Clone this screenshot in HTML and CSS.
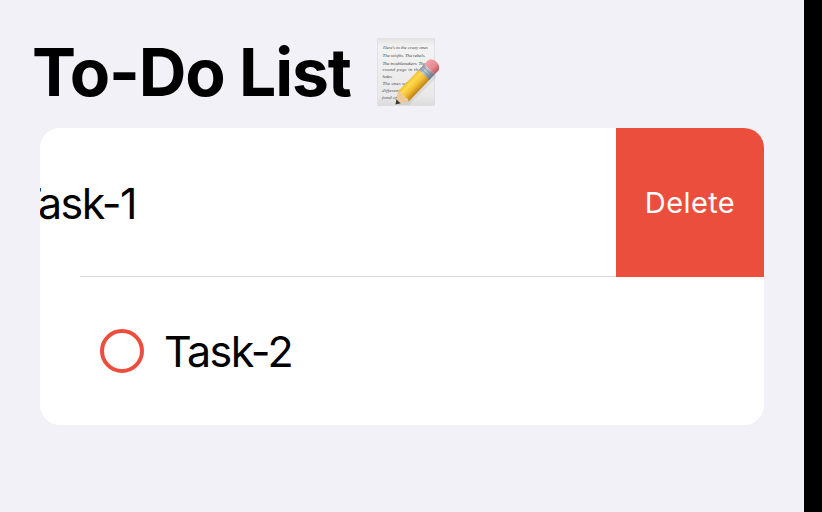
FILE: index.html
```html
<!DOCTYPE html>
<html lang="en">
<head>
<meta charset="utf-8">
<title>To-Do List</title>
<link rel="stylesheet" href="styles.css">
</head>
<body>
<main class="screen">
  <header class="header">
    <h1 class="title">To-Do List</h1>
    <svg class="memo" viewBox="0 0 66 72" role="img" aria-label="Memo">
      <defs>
        <linearGradient id="paper" x1="0" y1="0" x2="0" y2="1">
          <stop offset="0" stop-color="#e4e4e5"/><stop offset=".12" stop-color="#f3f3f3"/>
          <stop offset=".85" stop-color="#e9e9e9"/><stop offset="1" stop-color="#dcdcdd"/>
        </linearGradient>
        <linearGradient id="wood" x1="0" y1="0" x2="0" y2="1">
          <stop offset="0" stop-color="#f0c02e"/><stop offset=".25" stop-color="#fddb52"/>
          <stop offset=".6" stop-color="#f3bd30"/><stop offset="1" stop-color="#bd8018"/>
        </linearGradient>
        <linearGradient id="ferrule" x1="0" y1="0" x2="0" y2="1">
          <stop offset="0" stop-color="#8f9aa8"/><stop offset=".35" stop-color="#c5cdd6"/><stop offset="1" stop-color="#687382"/>
        </linearGradient>
        <linearGradient id="rubber" x1="0" y1="0" x2="0" y2="1">
          <stop offset="0" stop-color="#f3a3aa"/><stop offset=".6" stop-color="#e88790"/><stop offset="1" stop-color="#ba5665"/>
        </linearGradient>
      </defs>
      <rect x="1.7" y="2.8" width="57" height="66.5" fill="url(#paper)" stroke="#d9d9dc" stroke-width=".7"/>
      <g class="script">
        <text x="7" y="13" textLength="45">Here's to the crazy ones</text>
        <text x="6.5" y="21" textLength="43">The misfits. The rebels.</text>
        <text x="6.500" y="28.500" textLength="43">The troublemakers. The</text>
        <text x="6.5" y="35" textLength="38">round pegs in the</text>
        <text x="6.5" y="41.5" textLength="10">holes.</text>
        <text x="6.5" y="48.5" textLength="28">The ones who</text>
        <text x="6" y="55.5" textLength="22">differently</text>
        <text x="6" y="62.5" textLength="15">fond of</text>
      </g>
      <path d="M21 69L33 69L60 42V34z" fill="#777" opacity=".12"/>
      <g transform="translate(19.5 68.500) rotate(-46)">
        <path d="M0 0L11-7.300L14-2L13 3L11 7.300z" fill="#edc99a"/>
        <path d="M0 0L4.500-3L4.300 0L4.500 3z" fill="#35383b"/>
        <path d="M42-7.300V7.300H11Q14 5 11.500 2.200Q14 0 11.500-2.200Q14-5 11-7.300z" fill="url(#wood)"/>
        <path d="M41-7.300H49V7.300H41z" fill="url(#ferrule)"/>
        <path d="M43.500-7V7M46.500-7V7" stroke="#77828e" stroke-width=".7"/>
        <path d="M49-7.300H54Q59-6.500 59 0T54 7.300H49z" fill="url(#rubber)"/>
      </g>
    </svg>
  </header>
  <ul class="list">
    <li class="row row-swiped">
      <div class="content"><span class="task task-shifted">Task-1</span></div>
      <button class="delete" type="button"><span class="delete-label">Delete</span></button>
    </li>
    <li class="row">
      <span class="check"></span>
      <span class="task">Task-2</span>
    </li>
  </ul>
</main>
</body>
</html>
```
FILE: styles.css
```css
* { box-sizing: border-box; }
body {
  margin: 0;
  height: 512px;
  overflow: hidden;
  background: #000;
  color: #000;
  font-family: Inter, "Liberation Sans", sans-serif;
}
.screen {
  width: 804px;
  height: 512px;
  padding: 32px 40px 0;
  background: #f2f1f7;
}
.header {
  display: flex;
  height: 96px;
  margin-left: -8px;
}
.title {
  margin: 0;
  width: 344px;
  font-size: 66px;
  font-weight: 700;
  line-height: 80px;
  letter-spacing: -1.15px;
  white-space: nowrap;
}
.memo {
  display: block;
  flex: none;
  width: 66px;
  height: 72px;
  margin-top: 4px;
}
.script {
  fill: #4a4a4d;
  font: italic 5px "Liberation Serif", serif;
}
.list {
  margin: 0;
  padding: 0;
  height: 297px;
  overflow: hidden;
  list-style: none;
  background: #fff;
  border-radius: 20px;
}
.row {
  display: flex;
  align-items: center;
  height: 148px;
  padding-left: 60px;
}
.row-swiped {
  height: 149px;
  padding-left: 0;
}
.content {
  display: flex;
  flex: 1;
  align-items: center;
  height: 149px;
  overflow: hidden;
  background: linear-gradient(#d9d9db, #d9d9db) 40px 100% / 100% 1px no-repeat;
}
.task {
  font-size: 43px;
  line-height: 52px;
  letter-spacing: -1.6px;
  white-space: nowrap;
}
.task-shifted { margin-left: -25px; }
.check {
  width: 44px;
  height: 44px;
  margin-right: 20px;
  border: 4px solid #eb4e3d;
  border-radius: 50%;
}
.delete {
  width: 148px;
  height: 149px;
  padding: 0;
  border: 0;
  background: #eb4e3d;
  color: #fff;
  font: 400 29px/36px Inter, "Liberation Sans", sans-serif;
}
.delete-label { letter-spacing: .4px; }
```
